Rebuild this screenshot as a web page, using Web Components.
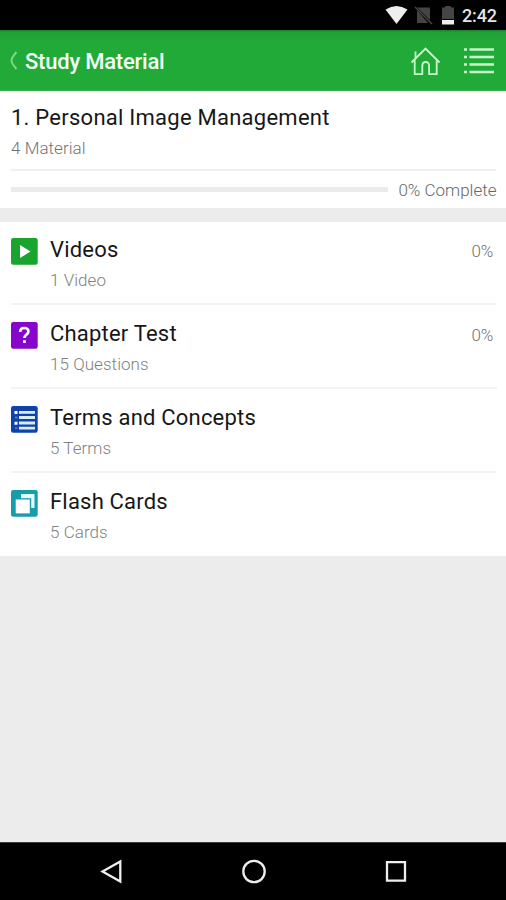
<!DOCTYPE html>
<html lang="en"><head><meta charset="utf-8"><title>Study Material</title>
<style>html,body{margin:0;height:100%;background:#ececec}body{font-family:Roboto,sans-serif;overflow:hidden}</style></head>
<body><study-app></study-app>
<script>
const define=(name,html)=>customElements.define(name,class extends HTMLElement{
  constructor(){super();this.attachShadow({mode:'open'}).innerHTML='<style>*{box-sizing:border-box}svg{display:block}</style>'+html;}
});
define('status-bar',`<style>:host{display:flex;height:30px;background:#000;color:#e4e4e4;align-items:center;justify-content:flex-end;padding-right:9px;box-sizing:border-box}
span{font:500 18px/30px Roboto,sans-serif;letter-spacing:-.1px;padding-top:2px}</style>
<svg width="80" height="30" viewBox="0 0 80 30"><path d="M3.5 9.5Q14.5 2.5 25.5 9.5L14.5 24Z" fill="#eee"/><path d="M35 7.5L48 20V7.5ZM35 10V23H46Z" fill="#444"/><path d="M33 7L50 24" stroke="#444" stroke-width="1.6"/><path d="M60 7.5H63V6H69V7.5H72V19H60Z" fill="#444"/><path d="M60 20H72V24.5H60Z" fill="#eee"/></svg><span>2:42</span>`);
define('app-header',`<style>:host{display:flex;height:61px;background:linear-gradient(#1e7a32 0,#20a036 2px,#22aa38 13px);align-items:center;box-sizing:border-box;padding:2px 11px 0 10px;border-bottom:1px solid #35ab49}
h1{margin:2px auto 0 7px;font:500 22px/30px Roboto,sans-serif;color:#f4fff5;letter-spacing:-.22px}svg{fill:none;stroke:#c5fac9}</style>
<svg width="8" height="22" viewBox="0 0 8 22"><path d="M6.5 2C3 6 1.5 8 1.5 10.5S3 15 6.5 19" stroke="#7cda88" stroke-width="1.9"/></svg>
<h1><slot></slot></h1>
<svg style="margin-top:1px" width="32" height="32" viewBox="0 0 32 32" stroke-width="1.8"><path d="M2.5 16.5L16.5 2.5L30.5 16.5M6.5 13V5.5M5.7 14V28.2H13.3V20Q13.3 16 16.7 16T20.1 20V28.2H27.7V14"/></svg>
<svg style="margin-left:22px" width="32" height="32" viewBox="0 0 32 32"><path d="M1 4.5H4M1 12H4M1 19.5H4M1 27H4M6.5 4.5H31M6.5 12H31M6.5 19.5H31M6.5 27H31" stroke-width="2.5"/></svg>`);
define('chapter-summary',`<style>:host{display:block;height:117px;background:#fff;box-sizing:border-box;padding:12px 10px 0 11px}
h2{margin:0;font:385 22px/30px Roboto,sans-serif;letter-spacing:.25px;color:#171717}
p{margin:0;font:300 17px/31px Roboto,sans-serif;color:#747474;height:38px;border-bottom:2px solid #f0f0f0;letter-spacing:.05px}
.bar{display:flex;align-items:center;height:37px;gap:10px}.track{height:5px;flex:1;background:#ebebeb}.done{font:300 17px/38px Roboto,sans-serif;color:#686868;padding-top:1px;margin-right:-.5px}</style>
<h2><slot></slot></h2><p><slot name="count"></slot></p><div class="bar"><div class="track"></div><span class="done"><slot name="progress"></slot></span></div>`);
define('material-row',`<style>:host{display:grid;grid-template-columns:26px 1fr auto;column-gap:13.5px;height:84px;background:#fff;box-sizing:border-box;padding:14px 13px 0 10.5px;position:relative}
:host(.first){height:82px;padding-top:12px}
:host(:not(.last))::after{content:'';position:absolute;left:11px;right:9px;bottom:-1px;height:2px;background:#f3f3f3;z-index:1}
.icon{padding-top:4px}h3{margin:0;font:385 22px/31px Roboto,sans-serif;color:#171717;letter-spacing:.2px}
p{margin:0;font:300 17px/31px Roboto,sans-serif;color:#818181;letter-spacing:.05px}.pct{font:300 17px/34px Roboto,sans-serif;color:#707070;letter-spacing:-.3px}</style>
<div class="icon"><slot name="icon"></slot></div><div><h3><slot></slot></h3><p><slot name="count"></slot></p></div><div class="pct"><slot name="percent"></slot></div>`);
const icons={
 video:['#18a42d','<path d="M9 7L19.5 13.5L9 20Z" fill="#fff"/>'],
 test:['#8607cb','<path d="M9.2 10Q9.2 6 13.2 6Q17.4 6 17.4 9.5Q17.4 11.4 15.2 12.8Q13.4 14 13.4 16" fill="none" stroke="#fff" stroke-width="2.7"/><path d="M12 18.2H14.8V21H12Z" fill="#fff"/>'],
 terms:['#0d43aa','<path d="M3.5 5H6.5V8H3.5ZM3.5 15.8H6.5V18.8H3.5Z" fill="#fff"/><path d="M4 11.5H6.5M4 22.2H6.5" stroke="#5f8bdc" stroke-width="1.3"/><path d="M8 6.3H24M8 11.5H24M8 17H24M8 22.2H24" stroke="#dcecff" stroke-width="2.8"/>'],
 cards:['#179cab','<path d="M10 4H23.5V18H10Z" fill="#e2fcff"/><path d="M4 8.2H20.2V24H4Z" fill="#179cab"/><path d="M4.7 9.5H18.8V23.4H4.7Z" fill="#fff"/>']};
customElements.define('material-icon',class extends HTMLElement{constructor(){super();this.attachShadow({mode:'open'});}
 connectedCallback(){const [c,s]=icons[this.getAttribute('kind')];this.shadowRoot.innerHTML='<style>:host{display:block}svg{display:block}</style><svg width="27" height="27" viewBox="0 0 27 27"><rect width="26.7" height="26.7" rx="2.2" fill="'+c+'"/>'+s+'</svg>';}});
define('nav-bar',`<style>:host{display:flex;height:58px;background:#000;box-sizing:border-box;border-top:1px solid #3c3c3c;padding:15px 96px 0 98px;justify-content:space-between}svg{fill:none;stroke:#eee;stroke-width:2.3}</style>
<svg width="28" height="28" viewBox="0 0 28 28"><path d="M4.5 13.5L22.3 3.5V23.6Z"/></svg><svg width="28" height="28" viewBox="0 0 28 28"><circle cx="14" cy="13.5" r="10.7"/></svg><svg width="28" height="28" viewBox="0 0 28 28"><path d="M5 4.2H23V22.7H5Z"/></svg>`);
define('study-app',`<style>:host{display:flex;flex-direction:column;height:900px;background:#ececec}main{flex:1}section{margin-top:14px}</style>
<status-bar></status-bar><app-header>Study Material</app-header><main>
<chapter-summary>1. Personal Image Management<span slot="count">4 Material</span><span slot="progress">0% Complete</span></chapter-summary>
<section><material-row class="first"><material-icon slot="icon" kind="video"></material-icon>Videos<span slot="count">1 Video</span><span slot="percent">0%</span></material-row>
<material-row><material-icon slot="icon" kind="test"></material-icon>Chapter Test<span slot="count">15 Questions</span><span slot="percent">0%</span></material-row>
<material-row><material-icon slot="icon" kind="terms"></material-icon>Terms and Concepts<span slot="count">5 Terms</span></material-row>
<material-row class="last"><material-icon slot="icon" kind="cards"></material-icon>Flash Cards<span slot="count">5 Cards</span></material-row></section></main><nav-bar></nav-bar>`);
</script></body></html>
